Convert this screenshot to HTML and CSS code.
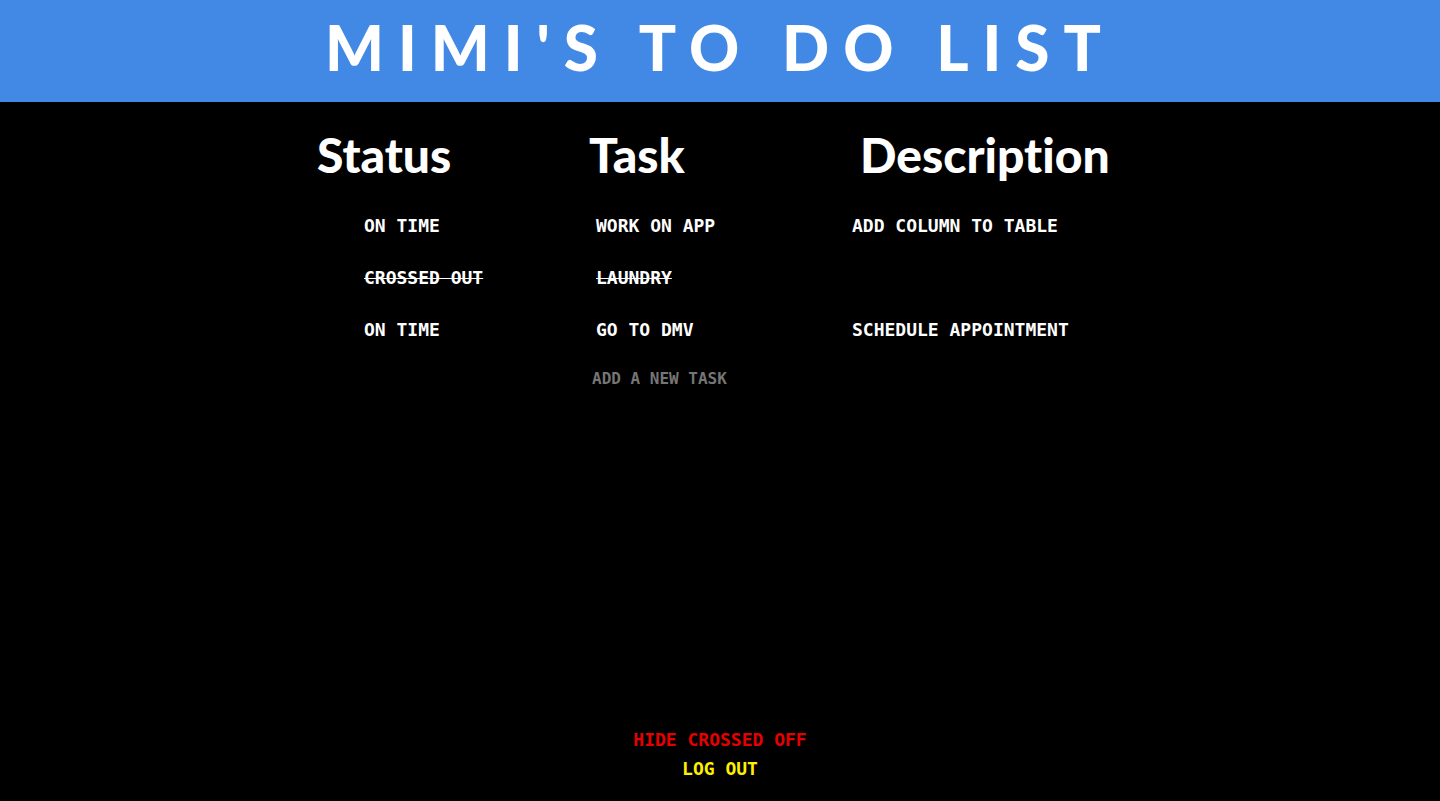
FILE: index.html
```html
<!DOCTYPE html>
<html lang="en">
<head>
<meta charset="utf-8">
<meta name="viewport" content="width=device-width, initial-scale=1">
<title>Mimi's To Do List</title>
<link rel="stylesheet" href="styles.css">
</head>
<body>
<header class="banner"><h1 class="title">MIMI'S TO DO LIST</h1></header>
<main class="content">
<table class="tasks">
<colgroup><col class="col-status"><col class="col-task"><col class="col-description"></colgroup>
<thead>
<tr><th scope="col">Status</th><th scope="col">Task</th><th scope="col">Description</th></tr>
</thead>
<tbody>
<tr><td>ON TIME</td><td>WORK ON APP</td><td>ADD COLUMN TO TABLE</td></tr>
<tr><td><s>CROSSED OUT</s></td><td><s>LAUNDRY</s></td><td></td></tr>
<tr><td>ON TIME</td><td>GO TO DMV</td><td>SCHEDULE APPOINTMENT</td></tr>
</tbody>
<tfoot>
<tr><td></td><td><input class="new-task" type="text" placeholder="ADD A NEW TASK" aria-label="Add a new task"></td><td></td></tr>
</tfoot>
</table>
</main>
<footer class="actions">
<button class="action hide" type="button">HIDE CROSSED OFF</button>
<button class="action logout" type="button">LOG OUT</button>
</footer>
</body>
</html>
```
FILE: styles.css
```css
* { box-sizing: border-box; }
body {
  margin: 0;
  min-height: 100vh;
  display: flex;
  flex-direction: column;
  background: #000;
  color: #fff;
  font: bold 18px/24px "DejaVu Sans Mono", monospace;
}
.banner {
  padding: 7px 16px 15px;
  background: #4289e6;
  text-align: center;
}
.title {
  margin: 0;
  font: 900 62px/80px Lato, sans-serif;
  letter-spacing: 14px;
}
.content { flex: 1; padding-top: 24px; }
.tasks {
  width: 806px;
  max-width: 100%;
  margin: 0 auto;
  border-collapse: collapse;
  table-layout: fixed;
  text-align: left;
}
.col-status { width: 272px; }
.col-task { width: 263px; }
th {
  padding: 0 0 16px;
  font: 900 48px/58px Lato, sans-serif;
  font-variant-ligatures: none;
}
th:last-child { padding-left: 8px; }
td {
  height: 52px;
  padding: 0;
  white-space: nowrap;
}
td:first-child { padding-left: 47px; }
td:nth-child(2) { padding-left: 7px; }
s { text-decoration-thickness: 1px; }
tfoot td { height: 46px; }
tfoot td:nth-child(2) { padding-left: 3px; }
.new-task {
  display: block;
  width: 100%;
  padding: 0;
  border: 0;
  outline: 0;
  background: transparent;
  color: #fff;
  font: bold 16px/24px "DejaVu Sans Mono", monospace;
}
.new-task::placeholder { color: #757575; opacity: 1; }
.actions {
  display: flex;
  flex-direction: column;
  align-items: center;
  gap: 5px;
  padding-bottom: 20px;
}
.action {
  padding: 0;
  border: 0;
  background: transparent;
  font: inherit;
  cursor: pointer;
}
.hide { color: #e60000; }
.logout { color: #fff000; }
```
